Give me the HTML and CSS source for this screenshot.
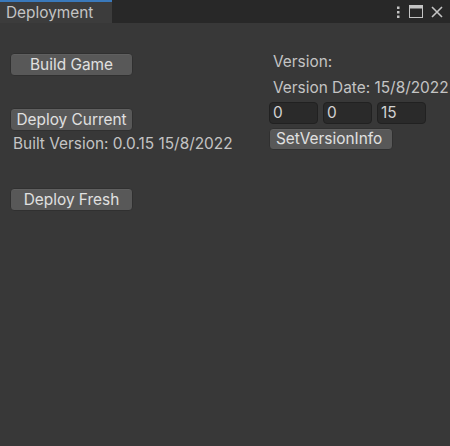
FILE: index.html
```html
<!DOCTYPE html>
<html>
<head>
<meta charset="utf-8">
<link rel="stylesheet" href="styles.css">
</head>
<body>
<div class="window">
  <div class="header">
    <div class="tab">Deployment</div>
    <div class="tools">
      <svg class="icon" width="6" height="14" viewBox="0 0 6 14"><rect x="2" y="1.5" width="2.5" height="2.5" fill="#c4c4c4"/><rect x="2" y="6" width="2.5" height="2.5" fill="#c4c4c4"/><rect x="2" y="10.5" width="2.5" height="2.5" fill="#c4c4c4"/></svg>
      <svg class="icon" width="14" height="13" viewBox="0 0 14 13"><rect x="0.5" y="0.5" width="13" height="12" fill="none" stroke="#c4c4c4"/><rect x="0.5" y="0.5" width="13" height="3" fill="#c4c4c4"/></svg>
      <svg class="icon" width="12" height="12" viewBox="0 0 12 12"><path d="M1 1 L11 11 M11 1 L1 11" stroke="#c4c4c4" stroke-width="1.6"/></svg>
    </div>
  </div>
  <div class="content">
    <div class="col left">
      <button class="btn b1">Build Game</button>
      <button class="btn b2">Deploy Current</button>
      <div class="label built">Built Version: 0.0.15 15/8/2022</div>
      <button class="btn b3">Deploy Fresh</button>
    </div>
    <div class="col right">
      <div class="label v1">Version:</div>
      <div class="label v2">Version Date: 15/8/2022</div>
      <div class="fields">
        <div class="field">0</div>
        <div class="field">0</div>
        <div class="field">15</div>
      </div>
      <button class="btn set">SetVersionInfo</button>
    </div>
  </div>
</div>
</body>
</html>
```
FILE: styles.css
```css
html, body {
  margin: 0;
  padding: 0;
  background: #383838;
}
.window {
  width: 450px;
  height: 446px;
  background: #383838;
  font-family: Inter, "Noto Sans", sans-serif;
  font-size: 15.4px;
  color: #c4c4c4;
  overflow: hidden;
}
.header {
  height: 23px;
  background: #282828;
  display: flex;
  justify-content: space-between;
  align-items: stretch;
}
.tab {
  width: 112px;
  box-sizing: border-box;
  background: #3c3c3c;
  border-top: 2px solid #3a79bb;
  padding-left: 6px;
  line-height: 21px;
  color: #c4c4c4;
  font-size: 15.4px;
}
.tools {
  display: flex;
  align-items: center;
  gap: 8px;
  padding-right: 7px;
}
.icon { display: block; }
.content {
  display: flex;
}
.col {
  display: flex;
  flex-direction: column;
  align-items: flex-start;
}
.left {
  padding-left: 10px;
  width: 269px;
  box-sizing: border-box;
}
.btn {
  font-family: Inter, "Noto Sans", sans-serif;
  font-size: 15.4px;
  color: #e0e0e0;
  background: #585858;
  border: 1px solid #303030;
  border-radius: 4px;
  height: 23px;
  padding: 0;
  line-height: 21px;
  box-sizing: border-box;
  box-shadow: inset 0 1px 0 #5f5f5f;
}
.b1, .b2, .b3 { width: 123px; }
.b1 { margin-top: 30px; }
.b2 { margin-top: 32px; }
.built {
  margin-top: 2px;
  padding-left: 3px;
  height: 22px;
  line-height: 22px;
}
.b3 { margin-top: 33px; }
.label {
  white-space: nowrap;
}
.right {
  padding-top: 28px;
}
.v1, .v2 {
  height: 22px;
  line-height: 22px;
  padding-left: 4px;
}
.v2 { margin-top: 4px; }
.fields {
  display: flex;
  gap: 5px;
  margin-top: 3px;
}
.field {
  width: 49px;
  height: 22px;
  box-sizing: border-box;
  background: #2a2a2a;
  border: 1px solid #212121;
  border-radius: 4px;
  line-height: 20px;
  padding-left: 3px;
  color: #d2d2d2;
}
.set {
  margin-top: 4px;
  width: 124px;
  height: 22px;
  line-height: 20px;
  text-align: left;
  padding-left: 6px;
}
```
